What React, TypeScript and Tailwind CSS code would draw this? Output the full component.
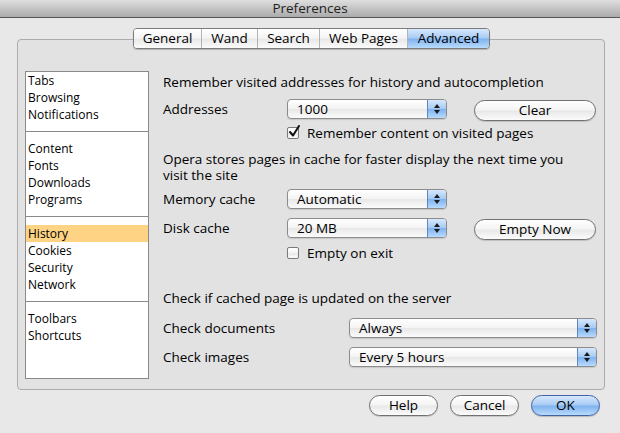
const font = { fontFamily: '"Lucida Grande", "Open Sans", "Liberation Sans", sans-serif' };

const sections = [
  ["Tabs", "Browsing", "Notifications"],
  ["Content", "Fonts", "Downloads", "Programs"],
  ["History", "Cookies", "Security", "Network"],
  ["Toolbars", "Shortcuts"],
];

const tabs = [
  { label: "General", w: "w-[67px]" },
  { label: "Wand", w: "w-[56px]" },
  { label: "Search", w: "w-[62px]" },
  { label: "Web Pages", w: "w-[88px]" },
  { label: "Advanced", w: "w-[82px]" },
];

const aqua =
  "bg-[linear-gradient(to_bottom,#d6e8fc_0%,#a7cbf4_48%,#7eb2ef_52%,#b9dbfd_100%)]";
const glass =
  "bg-[linear-gradient(to_bottom,#ffffff_0%,#f4f4f4_48%,#e8e8e8_52%,#fbfbfb_100%)]";

function Stepper() {
  return (
    <span
      className={`flex w-[19px] flex-col items-center justify-center gap-[2px] border-l border-[#5f86c0] ${aqua}`}
    >
      <svg width="6" height="4" viewBox="0 0 6 4">
        <path d="M3 0 L6 4 L0 4 Z" fill="#1a1a1a" />
      </svg>
      <svg width="6" height="4" viewBox="0 0 6 4">
        <path d="M0 0 L6 0 L3 4 Z" fill="#1a1a1a" />
      </svg>
    </span>
  );
}

function Select({ value, width }: { value: string; width: string }) {
  return (
    <div
      className={`flex h-[20px] ${width} shrink-0 overflow-hidden rounded-[4px] border border-[#8c8c8c] ${glass} shadow-[0_1px_1px_rgba(0,0,0,0.12)]`}
    >
      <span className="flex-1 pl-[9px] text-[13.5px] leading-[18px]">{value}</span>
      <Stepper />
    </div>
  );
}

function PillButton({ label, className }: { label: string; className: string }) {
  return (
    <div
      className={`flex h-[21px] items-center justify-center rounded-full border border-[#707070] ${glass} text-[13.5px] shadow-[0_1px_1px_rgba(0,0,0,0.15)] ${className}`}
    >
      {label}
    </div>
  );
}

function Checkbox({ checked }: { checked: boolean }) {
  return (
    <span
      className={`relative h-[12px] w-[12px] shrink-0 rounded-[2px] border border-[#7a7a7a] ${glass}`}
    >
      {checked && (
        <svg
          className="absolute -top-[3px] left-[0px]"
          width="13"
          height="13"
          viewBox="0 0 13 13"
        >
          <path
            d="M2 7 L5 10.5 L11 1"
            fill="none"
            stroke="#111"
            strokeWidth="2"
            strokeLinecap="round"
            strokeLinejoin="round"
          />
        </svg>
      )}
    </span>
  );
}

export default function App() {
  return (
    <div
      className="flex h-[433px] w-[620px] flex-col overflow-hidden bg-[#e8e8e8] text-black"
      style={font}
    >
      <div className="flex h-[18px] shrink-0 items-center justify-center border-b border-[#555] bg-[linear-gradient(to_bottom,#dedede,#ababab)] text-[13.5px] leading-none text-[#1e1e1e]">
        Preferences
      </div>

      <div className="relative z-10 mt-[10px] flex h-[21px] justify-center pl-[3px]">
        <div className="flex overflow-hidden rounded-[4px] border border-[#7b7b7b] shadow-[0_1px_1px_rgba(0,0,0,0.2)]">
          {tabs.map((t, i) => (
            <div
              key={t.label}
              className={`flex items-center justify-center text-[13.5px] ${t.w} ${
                i > 0 ? "border-l border-[#b5b5b5]" : ""
              } ${t.label === "Advanced" ? aqua : glass}`}
            >
              {t.label}
            </div>
          ))}
        </div>
      </div>

      <div className="mx-[17px] mr-[15px] -mt-[10px] flex h-[351px] rounded-[4px] border border-[#acacac] bg-[#e2e2e2] pb-[10px] pl-[7px] pt-[31px]">
        <div className="flex w-[124px] shrink-0 flex-col border border-[#8a8a8a] bg-white text-[12px]">
          {sections.map((items, si) => (
            <div
              key={si}
              className={`${si > 0 ? "border-t border-[#8a8a8a] pt-[8px]" : ""} pb-[8px]`}
            >
              {items.map((item) => (
                <div
                  key={item}
                  className={`h-[17px] pl-[2px] leading-[17px] ${
                    item === "History" ? "bg-[#fed383]" : ""
                  }`}
                >
                  {item}
                </div>
              ))}
            </div>
          ))}
        </div>

        <div className="ml-[14px] flex flex-1 flex-col pt-[3px] text-[13.5px]">
          <div className="leading-[16px]">
            Remember visited addresses for history and autocompletion
          </div>

          <div className="mt-[9px] flex h-[21px] items-start">
            <span className="w-[124px] leading-[20px]">Addresses</span>
            <Select value="1000" width="w-[160px]" />
            <PillButton label="Clear" className="ml-[27px] mt-[1px] w-[122px]" />
          </div>

          <div className="mt-[5px] flex h-[16px] items-center gap-[8px] pl-[124px]">
            <Checkbox checked />
            <span>Remember content on visited pages</span>
          </div>

          <div className="mt-[10px] leading-[16px]">
            Opera stores pages in cache for faster display the next time you
            <br />
            visit the site
          </div>

          <div className="mt-[6px] flex h-[20px] items-start">
            <span className="w-[124px] leading-[20px]">Memory cache</span>
            <Select value="Automatic" width="w-[160px]" />
          </div>

          <div className="mt-[9px] flex h-[21px] items-start">
            <span className="w-[124px] leading-[20px]">Disk cache</span>
            <Select value="20 MB" width="w-[160px]" />
            <PillButton label="Empty Now" className="ml-[27px] mt-[1px] w-[122px]" />
          </div>

          <div className="mt-[6px] flex h-[16px] items-center gap-[8px] pl-[124px]">
            <Checkbox checked={false} />
            <span>Empty on exit</span>
          </div>

          <div className="mt-[29px] leading-[16px]">
            Check if cached page is updated on the server
          </div>

          <div className="mt-[12px] flex h-[20px] items-start">
            <span className="w-[186px] leading-[20px]">Check documents</span>
            <Select value="Always" width="w-[248px]" />
          </div>

          <div className="mt-[9px] flex h-[20px] items-start">
            <span className="w-[186px] leading-[20px]">Check images</span>
            <Select value="Every 5 hours" width="w-[248px]" />
          </div>
        </div>
      </div>

      <div className="mr-[20px] mt-[5px] flex justify-end gap-[12px]">
        <PillButton label="Help" className="w-[69px]" />
        <PillButton label="Cancel" className="w-[69px]" />
        <div
          className={`flex h-[21px] w-[69px] items-center justify-center rounded-full border border-[#3f64a3] ${aqua} text-[13.5px] shadow-[0_1px_1px_rgba(0,0,0,0.2)]`}
        >
          OK
        </div>
      </div>
    </div>
  );
}
